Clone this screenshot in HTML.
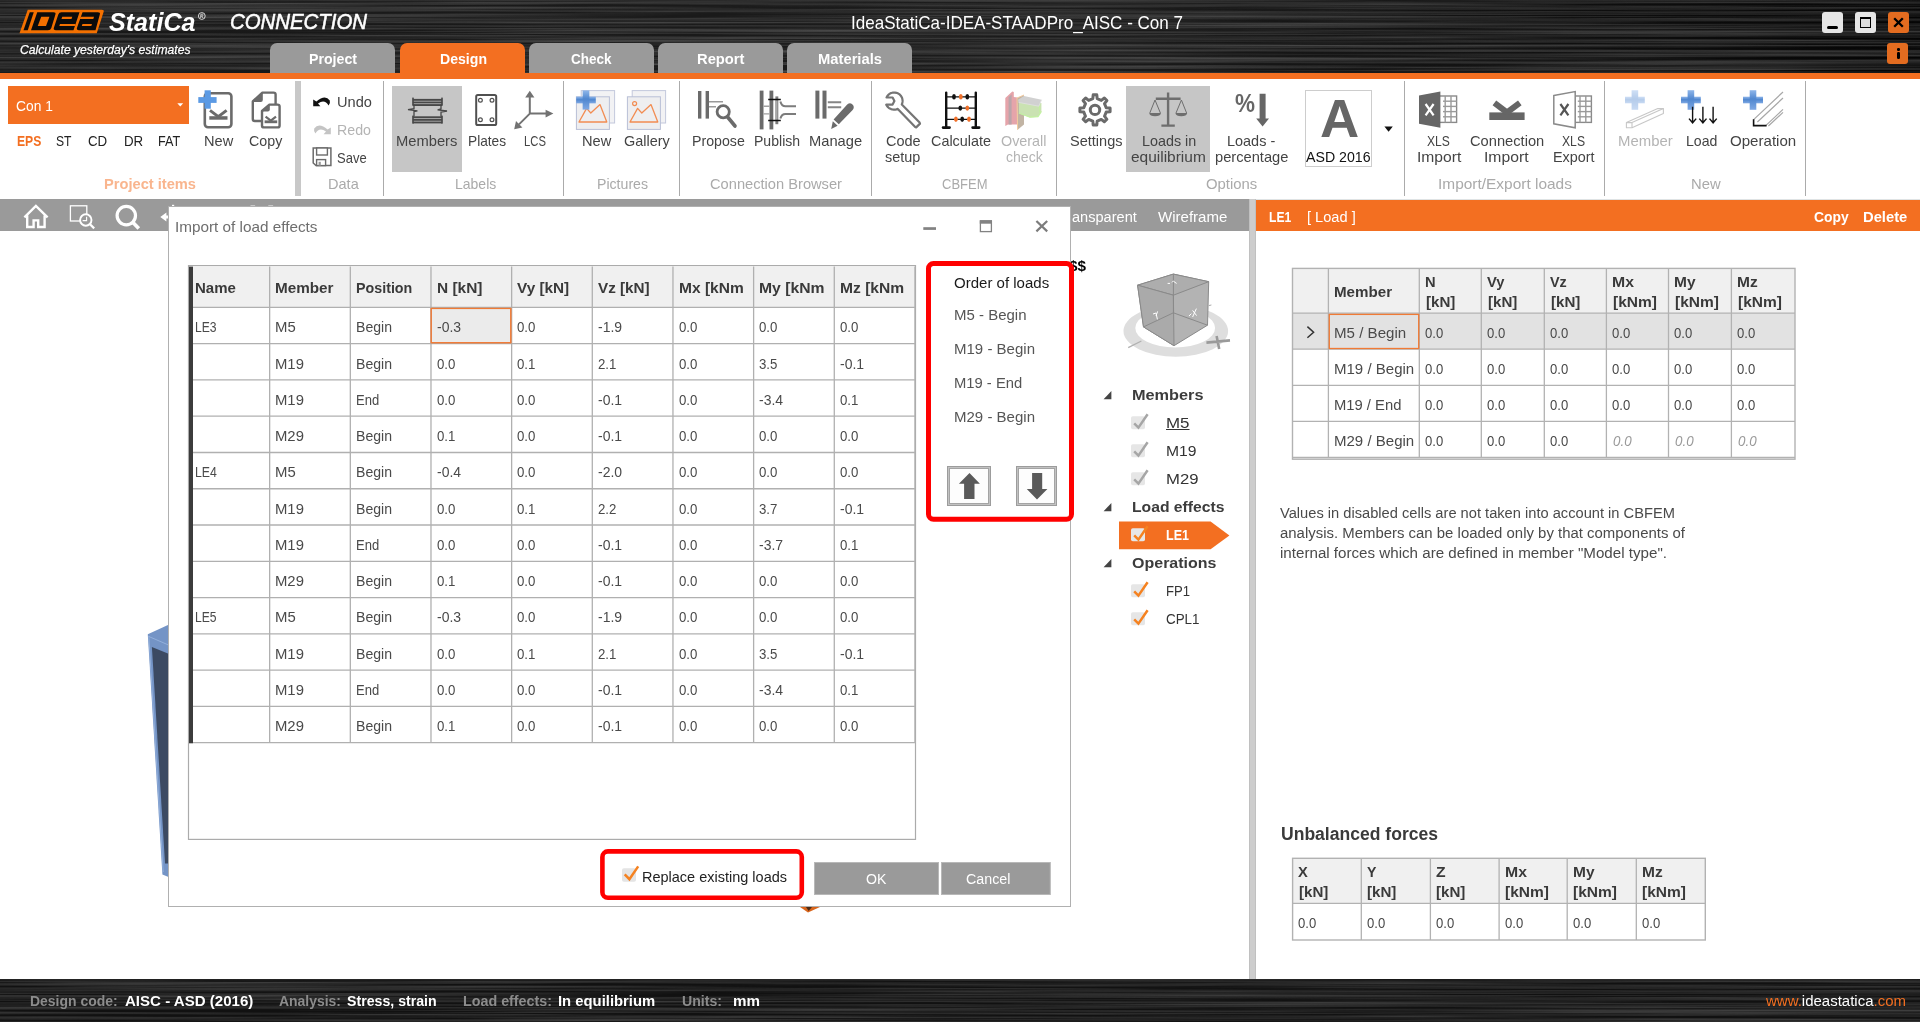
<!DOCTYPE html>
<html>
<head>
<meta charset="utf-8">
<title>IdeaStatiCa Connection</title>
<style>
*{box-sizing:border-box;margin:0;padding:0}
html,body{width:1920px;height:1022px;overflow:hidden;background:#fff}
body{font-family:"Liberation Sans",sans-serif;color:#444;position:relative;font-size:15px}
.abs{position:absolute}
.t{position:absolute;white-space:nowrap;line-height:1;display:block}
#hdr{left:0;top:0;width:1920px;height:74px;background:#1b1b1b;overflow:hidden}
#hdrline{left:0;top:73px;width:1920px;height:6px;background:#f36f21}
.tab{position:absolute;top:43px;height:30px;width:125px;border-radius:7px 7px 0 0;background:#9a9a9a}
.tab.on{background:#f36f21}
#ribbon{left:0;top:79px;width:1920px;height:120px;background:#fff}
.sep{position:absolute;top:81px;width:1px;height:115px;background:#ababab}
.hl{position:absolute;top:86px;height:86px;background:#c6c6c6}
#tbar{left:0;top:199px;width:1249px;height:32px;background:#9a9a9a}
#split{left:1249px;top:199px;width:7px;height:779.5px;background:#cdcdcd;border-left:1px solid #c0c0c0;border-right:1px solid #c0c0c0}
#ohdr{left:1256px;top:199px;width:664px;height:32px;background:#f36f21;border-top:1px solid #dfe3e4}
#status{left:0;top:978.5px;width:1920px;height:44px;background:#161616;overflow:hidden}
#dlg{left:168px;top:206px;width:903px;height:701px;background:#fff;border:1px solid #b0b0b0}
.vl{position:absolute;width:1px;background:#b4b4b4}
.hl1{position:absolute;height:1px;background:#b4b4b4}
.cb{position:absolute;width:15px;height:15px;background:#e4e4e4;border-radius:2px}
svg{position:absolute;overflow:visible}
</style>
</head>
<body>

<div id="hdr" class="abs">
<svg style="left:0;top:0" width="1920" height="74"><defs><filter id="br" x="0" y="0" width="100%" height="100%"><feTurbulence type="fractalNoise" baseFrequency="0.002 0.42" numOctaves="4" seed="7"/><feColorMatrix type="matrix" values="0 0 0 0 1  0 0 0 0 1  0 0 0 0 1  2.0 0 0 0 -0.62"/></filter><linearGradient id="hg" x1="0" x2="1" y1="0" y2="0"><stop offset="0" stop-color="#181818"/><stop offset="0.55" stop-color="#1b1b1b"/><stop offset="0.8" stop-color="#101010"/><stop offset="1" stop-color="#050505"/></linearGradient></defs><rect width="1920" height="74" fill="url(#hg)"/><rect width="1920" height="74" filter="url(#br)" opacity="0.2"/></svg>
</div>
<div id="hdrline" class="abs"></div>
<div class="tab" style="left:270px"></div>
<div class="tab on" style="left:400px"></div>
<div class="tab" style="left:529px"></div>
<div class="tab" style="left:658px"></div>
<div class="tab" style="left:787px"></div>
<div id="ribbon" class="abs"></div>
<div id="tbar" class="abs"></div>
<div id="split" class="abs"></div>
<div id="ohdr" class="abs"></div>
<div id="status" class="abs">
<svg style="left:0;top:0" width="1920" height="44"><rect width="1920" height="44" fill="#111111"/><rect width="1920" height="44" filter="url(#br)" opacity="0.19"/></svg>
</div>
<span class="t" style="top:51.48px;font-size:15.5px;color:#fff;font-weight:bold;left:308.50px;transform:scaleX(0.9132);transform-origin:0 50%;">Project</span><span class="t" style="top:51.48px;font-size:15.5px;color:#fff;font-weight:bold;left:439.50px;transform:scaleX(0.9093);transform-origin:0 50%;">Design</span><span class="t" style="top:51.48px;font-size:15.5px;color:#fff;font-weight:bold;left:571.45px;transform:scaleX(0.8704);transform-origin:0 50%;">Check</span><span class="t" style="top:51.48px;font-size:15.5px;color:#fff;font-weight:bold;left:697.45px;transform:scaleX(0.9509);transform-origin:0 50%;">Report</span><span class="t" style="top:51.48px;font-size:15.5px;color:#fff;font-weight:bold;left:817.50px;transform:scaleX(0.9523);transform-origin:0 50%;">Materials</span><span class="t" style="top:14.01px;font-size:18.5px;color:#fff;left:851.00px;transform:scaleX(0.9208);transform-origin:0 50%;">IdeaStatiCa-IDEA-STAADPro_AISC - Con 7</span><span class="t" style="top:993.48px;font-size:15.5px;color:#8c8c8c;font-weight:bold;left:30.40px;transform:scaleX(0.9000);transform-origin:0 50%;">Design code:</span><span class="t" style="top:993.48px;font-size:15.5px;color:#fff;font-weight:bold;left:125.00px;transform:scaleX(0.9714);transform-origin:0 50%;">AISC - ASD (2016)</span><span class="t" style="top:993.48px;font-size:15.5px;color:#8c8c8c;font-weight:bold;left:279.00px;transform:scaleX(0.8996);transform-origin:0 50%;">Analysis:</span><span class="t" style="top:993.48px;font-size:15.5px;color:#fff;font-weight:bold;left:347.00px;transform:scaleX(0.9133);transform-origin:0 50%;">Stress, strain</span><span class="t" style="top:993.48px;font-size:15.5px;color:#8c8c8c;font-weight:bold;left:462.50px;transform:scaleX(0.9226);transform-origin:0 50%;">Load effects:</span><span class="t" style="top:993.48px;font-size:15.5px;color:#fff;font-weight:bold;left:558.30px;transform:scaleX(0.9565);transform-origin:0 50%;">In equilibrium</span><span class="t" style="top:993.48px;font-size:15.5px;color:#8c8c8c;font-weight:bold;left:681.70px;transform:scaleX(0.9107);transform-origin:0 50%;">Units:</span><span class="t" style="top:993.48px;font-size:15.5px;color:#fff;font-weight:bold;left:732.50px;transform:scaleX(0.9790);transform-origin:0 50%;">mm</span><span class="t" style="top:993.18px;font-size:15.5px;color:#fff;left:1766.00px;transform:scaleX(0.9672);transform-origin:0 50%;"><span style="color:#f36f21">www.</span>ideastatica<span style="color:#f36f21">.com</span></span>
<svg style="left:0;top:0" width="220" height="40" viewBox="0 0 220 40">
<path d="M27.75,9.75 L101.8,9.75 Q104.4,9.75 103.6,12 L96.75,33.25 L19.5,33.25 Z" fill="#f37000"/>
<g fill="#0b0b0b">
<path d="M29.75,12.25 L33.75,12.25 L27.75,30.25 L23.5,30.25 Z"/>
<path d="M37.25,12.25 L53.3,12.25 Q56.2,12.25 55.4,14.6 L51.3,28 Q50.6,30.25 48,30.25 L31,30.25 Z"/>
<path d="M61.5,12.25 L79.5,12.25 L73.5,30.25 L56,30.25 Q53,30.25 53.9,27.8 L58.3,14.5 Q59,12.25 61.5,12.25 Z"/>
<path d="M82.5,12.25 L97.8,12.25 Q100.6,12.25 99.8,14.6 L95.5,30.25 L79,30.25 Q76.2,30.25 77,27.8 Z"/>
</g>
<g fill="#f37000">
<path d="M41.25,16.75 L49.5,16.75 L46,26 L37.75,26 Z"/>
<path d="M62.25,16.75 L72.25,16.75 L71.5,19 L61.5,19 Z"/>
<path d="M60,24 L75.6,24 L74.9,26 L59.3,26 Z"/>
<path d="M80.6,16.75 L94,16.75 L93.3,19 L79.9,19 Z"/>
<path d="M82.5,24 L92,24 L91.3,26 L81.8,26 Z"/>
</g>
<circle cx="201.8" cy="16" r="3.4" fill="none" stroke="#e8e8e8" stroke-width="0.9"/>
<path d="M200.6,17.9 L200.9,14.2 L202.4,14.2 Q203.3,14.3 203.1,15.2 Q202.9,16 201.9,16 L200.8,16 M201.9,16 L202.8,17.9" fill="none" stroke="#e8e8e8" stroke-width="0.8"/>
</svg>
<span class="t" style="top:9.69px;font-size:25.5px;color:#fff;font-weight:bold;font-style:italic;left:108.50px;transform:scaleX(0.9845);transform-origin:0 50%;">StatiCa</span><span class="t" style="top:11.40px;font-size:21.8px;color:#fff;font-style:italic;left:229.50px;transform:scaleX(0.9350);transform-origin:0 50%;-webkit-text-stroke:0.55px #fff;">CONNECTION</span><span class="t" style="top:44.09px;font-size:12.6px;color:#fff;font-style:italic;left:19.80px;transform:scaleX(0.9649);transform-origin:0 50%;-webkit-text-stroke:0.25px #fff;">Calculate yesterday's estimates</span>
<div class="abs" style="left:1822px;top:12px;width:21px;height:21px;background:#e6e6e6;border-radius:3px"></div>
<div class="abs" style="left:1827px;top:26px;width:11px;height:3px;background:#000;border-radius:1.5px"></div>
<div class="abs" style="left:1855px;top:12px;width:21px;height:21px;background:#e6e6e6;border-radius:3px"></div>
<div class="abs" style="left:1860px;top:17px;width:11px;height:11px;border:1.6px solid #000;border-top-width:2.2px;background:#dcdcdc"></div>
<div class="abs" style="left:1888px;top:12px;width:21px;height:21px;background:#e36c20;border-radius:3px"></div>
<svg style="left:1888px;top:12px" width="21" height="21"><path d="M6.2,6.2 L14.8,14.8 M14.8,6.2 L6.2,14.8" stroke="#000" stroke-width="2.3"/></svg>
<div class="abs" style="left:1887px;top:43px;width:21px;height:21px;background:#e36c20;border-radius:3px"></div>
<div class="abs" style="left:1897.2px;top:48px;width:2.6px;height:2.6px;background:#000;border-radius:50%"></div>
<div class="abs" style="left:1897.2px;top:52.4px;width:2.6px;height:6.6px;background:#000;border-radius:1.2px"></div>

<div class="abs" style="left:8px;top:86px;width:181px;height:38px;background:#f36f21"></div>
<svg style="left:177px;top:103px" width="7" height="4"><path d="M0.3,0.3 L6.2,0.3 L3.25,3.6 Z" fill="#fff"/></svg>
<div class="abs" style="left:295px;top:81px;width:6px;height:115px;background:#c8c8c8"></div>
<div class="hl" style="left:392px;width:70px"></div>
<div class="hl" style="left:1126px;width:84px"></div>
<div class="abs" style="left:1305px;top:90px;width:67px;height:77px;border:1px solid #cdcdcd;background:#fff"></div>
<div class="sep" style="left:383px"></div><div class="sep" style="left:563px"></div><div class="sep" style="left:679px"></div><div class="sep" style="left:871px"></div><div class="sep" style="left:1056px"></div><div class="sep" style="left:1404px"></div><div class="sep" style="left:1604px"></div><div class="sep" style="left:1805px"></div><span class="t" style="top:98.32px;font-size:15.2px;color:#fff;left:16.20px;transform:scaleX(0.9079);transform-origin:0 50%;">Con 1</span><span class="t" style="top:133.92px;font-size:14.6px;color:#222;left:56.25px;transform:scaleX(0.8308);transform-origin:0 50%;">ST</span><span class="t" style="top:133.92px;font-size:14.6px;color:#222;left:88.25px;transform:scaleX(0.9126);transform-origin:0 50%;">CD</span><span class="t" style="top:133.92px;font-size:14.6px;color:#222;left:123.75px;transform:scaleX(0.9126);transform-origin:0 50%;">DR</span><span class="t" style="top:133.92px;font-size:14.6px;color:#222;left:158.25px;transform:scaleX(0.8662);transform-origin:0 50%;">FAT</span><span class="t" style="top:133.92px;font-size:14.6px;color:#f36f21;font-weight:bold;left:16.50px;transform:scaleX(0.8321);transform-origin:0 50%;">EPS</span><span class="t" style="top:177.22px;font-size:14.6px;color:#f9b58e;font-weight:bold;left:103.50px;transform:scaleX(1.0038);transform-origin:0 50%;">Project items</span><span class="t" style="top:177.22px;font-size:14.6px;color:#aaa;left:328.00px;transform:scaleX(0.9975);transform-origin:0 50%;">Data</span><span class="t" style="top:177.22px;font-size:14.6px;color:#aaa;left:454.50px;transform:scaleX(0.9590);transform-origin:0 50%;">Labels</span><span class="t" style="top:177.22px;font-size:14.6px;color:#aaa;left:597.00px;transform:scaleX(0.9674);transform-origin:0 50%;">Pictures</span><span class="t" style="top:177.22px;font-size:14.6px;color:#aaa;left:710.00px;transform:scaleX(1.0044);transform-origin:0 50%;">Connection Browser</span><span class="t" style="top:177.22px;font-size:14.6px;color:#aaa;left:942.00px;transform:scaleX(0.8908);transform-origin:0 50%;">CBFEM</span><span class="t" style="top:177.22px;font-size:14.6px;color:#aaa;left:1206.25px;transform:scaleX(1.0189);transform-origin:0 50%;">Options</span><span class="t" style="top:177.22px;font-size:14.6px;color:#aaa;left:1438.30px;transform:scaleX(1.0581);transform-origin:0 50%;">Import/Export loads</span><span class="t" style="top:177.22px;font-size:14.6px;color:#aaa;left:1691.20px;transform:scaleX(1.0136);transform-origin:0 50%;">New</span><span class="t" style="top:134.02px;font-size:14.6px;color:#444;left:203.50px;transform:scaleX(0.9999);transform-origin:0 50%;">New</span><span class="t" style="top:134.02px;font-size:14.6px;color:#444;left:249.40px;transform:scaleX(0.9772);transform-origin:0 50%;">Copy</span><span class="t" style="top:134.02px;font-size:14.6px;color:#444;left:396.30px;transform:scaleX(1.0094);transform-origin:0 50%;">Members</span><span class="t" style="top:134.02px;font-size:14.6px;color:#444;left:467.50px;transform:scaleX(0.9393);transform-origin:0 50%;">Plates</span><span class="t" style="top:134.02px;font-size:14.6px;color:#444;left:523.70px;transform:scaleX(0.7714);transform-origin:0 50%;">LCS</span><span class="t" style="top:134.02px;font-size:14.6px;color:#444;left:581.50px;transform:scaleX(1.0033);transform-origin:0 50%;">New</span><span class="t" style="top:134.02px;font-size:14.6px;color:#444;left:624.10px;transform:scaleX(0.9906);transform-origin:0 50%;">Gallery</span><span class="t" style="top:134.02px;font-size:14.6px;color:#444;left:691.50px;transform:scaleX(0.9713);transform-origin:0 50%;">Propose</span><span class="t" style="top:134.02px;font-size:14.6px;color:#444;left:753.60px;transform:scaleX(0.9629);transform-origin:0 50%;">Publish</span><span class="t" style="top:134.02px;font-size:14.6px;color:#444;left:808.60px;transform:scaleX(1.0066);transform-origin:0 50%;">Manage</span><span class="t" style="top:134.02px;font-size:14.6px;color:#444;left:885.80px;transform:scaleX(0.9945);transform-origin:0 50%;">Code</span><span class="t" style="top:134.02px;font-size:14.6px;color:#444;left:931.40px;transform:scaleX(0.9861);transform-origin:0 50%;">Calculate</span><span class="t" style="top:134.02px;font-size:14.6px;color:#b4b4b4;left:1000.70px;transform:scaleX(0.9841);transform-origin:0 50%;">Overall</span><span class="t" style="top:134.02px;font-size:14.6px;color:#444;left:1069.50px;transform:scaleX(0.9956);transform-origin:0 50%;">Settings</span><span class="t" style="top:134.02px;font-size:14.6px;color:#444;left:1141.50px;transform:scaleX(0.9839);transform-origin:0 50%;">Loads in</span><span class="t" style="top:134.02px;font-size:14.6px;color:#444;left:1227.30px;transform:scaleX(0.9900);transform-origin:0 50%;">Loads -</span><span class="t" style="top:134.02px;font-size:14.6px;color:#444;left:1427.40px;transform:scaleX(0.8299);transform-origin:0 50%;">XLS</span><span class="t" style="top:134.02px;font-size:14.6px;color:#444;left:1469.50px;transform:scaleX(1.0062);transform-origin:0 50%;">Connection</span><span class="t" style="top:134.02px;font-size:14.6px;color:#444;left:1562.40px;transform:scaleX(0.8335);transform-origin:0 50%;">XLS</span><span class="t" style="top:134.02px;font-size:14.6px;color:#b4b4b4;left:1617.90px;transform:scaleX(1.0218);transform-origin:0 50%;">Member</span><span class="t" style="top:134.02px;font-size:14.6px;color:#444;left:1685.80px;transform:scaleX(0.9671);transform-origin:0 50%;">Load</span><span class="t" style="top:134.02px;font-size:14.6px;color:#444;left:1729.60px;transform:scaleX(1.0329);transform-origin:0 50%;">Operation</span><span class="t" style="top:150.02px;font-size:14.6px;color:#444;left:885.20px;transform:scaleX(0.9887);transform-origin:0 50%;">setup</span><span class="t" style="top:150.02px;font-size:14.6px;color:#b4b4b4;left:1005.60px;transform:scaleX(0.9626);transform-origin:0 50%;">check</span><span class="t" style="top:150.02px;font-size:14.6px;color:#444;left:1130.50px;transform:scaleX(1.0598);transform-origin:0 50%;">equilibrium</span><span class="t" style="top:150.02px;font-size:14.6px;color:#444;left:1215.00px;transform:scaleX(1.0050);transform-origin:0 50%;">percentage</span><span class="t" style="top:150.02px;font-size:14.6px;color:#444;left:1416.70px;transform:scaleX(1.0711);transform-origin:0 50%;">Import</span><span class="t" style="top:150.02px;font-size:14.6px;color:#444;left:1484.40px;transform:scaleX(1.0759);transform-origin:0 50%;">Import</span><span class="t" style="top:150.02px;font-size:14.6px;color:#444;left:1553.00px;transform:scaleX(0.9861);transform-origin:0 50%;">Export</span><span class="t" style="top:149.92px;font-size:14.6px;color:#111;left:1306.20px;transform:scaleX(0.9710);transform-origin:0 50%;">ASD 2016</span><span class="t" style="top:95.02px;font-size:14.6px;color:#444;left:337.40px;transform:scaleX(1.0003);transform-origin:0 50%;">Undo</span><span class="t" style="top:123.02px;font-size:14.6px;color:#b4b4b4;left:337.40px;transform:scaleX(0.9716);transform-origin:0 50%;">Redo</span><span class="t" style="top:150.92px;font-size:14.6px;color:#444;left:337.40px;transform:scaleX(0.8928);transform-origin:0 50%;">Save</span><span class="t" style="top:92.46px;font-size:53px;color:#666;font-weight:bold;left:1319.50px;transform:scaleX(1.0240);transform-origin:0 50%;">A</span><span class="t" style="top:91.49px;font-size:25.5px;color:#666;font-weight:bold;left:1235.00px;transform:scaleX(0.8815);transform-origin:0 50%;">%</span><svg style="left:0;top:0" width="1920" height="200" viewBox="0 0 1920 200"><defs><linearGradient id="bp" x1="0" x2="0" y1="0" y2="1"><stop offset="0" stop-color="#8fb6ea"/><stop offset="0.45" stop-color="#4f86cf"/><stop offset="1" stop-color="#7fa9e4"/></linearGradient></defs><rect x="204.8" y="93.2" width="26.6" height="34" rx="3.2" fill="#fff" stroke="#6b6b6b" stroke-width="2.6"/><path d="M210,110.4 L218.3,116.6 L226.6,110.4" fill="none" stroke="#6b6b6b" stroke-width="3"/><rect x="209.3" y="116.2" width="18.2" height="3.5" fill="#6b6b6b"/><rect x="198.3" y="97.1" width="18.3" height="5.8" fill="#5b9ae4"/><rect x="204.6" y="90.3" width="6.2" height="18.4" fill="#5b9ae4"/><path d="M262.4,92.6 L273.6,92.6 Q275.6,92.6 275.6,94.6 L275.6,119 Q275.6,121 273.6,121 L254.8,121 Q252.8,121 252.8,119 L252.8,101.4 Z" fill="#fff" stroke="#6b6b6b" stroke-width="2.4" stroke-linejoin="round"/><path d="M252.4,102 L260.8,102 Q262.8,102 262.8,100 L262.8,92 Z" fill="#6b6b6b"/><path d="M269.4,104.6 L277.6,104.6 Q279.6,104.6 279.6,106.6 L279.6,125.4 Q279.6,127.4 277.6,127.4 L264,127.4 Q262,127.4 262,125.4 L262,111 Z" fill="#fff" stroke="#6b6b6b" stroke-width="2.4" stroke-linejoin="round"/><path d="M261.6,111.6 L267.8,111.6 Q269.8,111.6 269.8,109.6 L269.8,104 Z" fill="#6b6b6b"/><path d="M265.6,116.6 L270.8,120.6 L276,116.6" fill="none" stroke="#6b6b6b" stroke-width="2.2"/><rect x="264.6" y="120.4" width="12.6" height="2.8" fill="#6b6b6b"/><path d="M313.2,99.4 L313.2,106.2 L320.4,106.2 L318,103.6 Q324.6,98.6 328.6,105.6 Q330.6,103 329.8,100.4 Q325,94 316.4,101.6 Z" fill="#111"/><path d="M330.8,127.4 L330.8,134.2 L323.6,134.2 L326,131.6 Q319.4,126.6 315.4,133.6 Q313.4,131 314.2,128.4 Q319,122 327.6,129.6 Z" fill="#c4c4c4"/><path d="M313.2,148 L330.9,148 L330.9,165.6 L316,165.6 L313.2,163 Z" fill="#fff" stroke="#6b6b6b" stroke-width="1.5"/><rect x="316.6" y="148" width="10.8" height="7" fill="#fff" stroke="#6b6b6b" stroke-width="1.4"/><rect x="316.6" y="159.6" width="9" height="6" fill="#fff" stroke="#6b6b6b" stroke-width="1.4"/><rect x="318.6" y="161.8" width="2.2" height="3.8" fill="#999"/><rect x="412.8" y="98.9" width="29.4" height="1.9" fill="#484848"/><rect x="412.8" y="101.5" width="29.4" height="1.9" fill="#484848"/><rect x="412.8" y="104.1" width="29.4" height="1.9" fill="#484848"/><rect x="412.8" y="116.3" width="29.4" height="1.9" fill="#484848"/><rect x="412.8" y="118.9" width="29.4" height="1.9" fill="#484848"/><rect x="412.8" y="121.5" width="29.4" height="1.9" fill="#484848"/><path d="M414,104.5 L414,108.6 L408,109.6 L417.4,110.8 L414,111.6 L414,116.6 M441,104.5 L441,109 L437.6,109.8 L447,111 L441,112 L441,116.6" fill="none" stroke="#484848" stroke-width="1.3"/><rect x="412.2" y="97.6" width="1.6" height="8" fill="#484848"/><rect x="441.2" y="97.6" width="1.6" height="8" fill="#484848"/><rect x="412.2" y="115.6" width="1.6" height="8" fill="#484848"/><rect x="441.2" y="115.6" width="1.6" height="8" fill="#484848"/><rect x="476.2" y="95" width="20" height="30" rx="1.6" fill="#fff" stroke="#505050" stroke-width="2"/><circle cx="480.4" cy="100.2" r="1.9" fill="none" stroke="#505050" stroke-width="1.2"/><circle cx="480.4" cy="119.8" r="1.9" fill="none" stroke="#505050" stroke-width="1.2"/><circle cx="492" cy="100.2" r="1.9" fill="none" stroke="#505050" stroke-width="1.2"/><circle cx="492" cy="119.8" r="1.9" fill="none" stroke="#505050" stroke-width="1.2"/><path d="M529.8,113.6 L529.8,97 M529.8,113.6 L546,113.6 M529.8,113.6 L519,124.4" fill="none" stroke="#727272" stroke-width="2"/><path d="M525.2,97.6 L529.8,90.8 L534.4,97.6 Z M545.6,109.8 L553.4,113.6 L545.6,117.4 Z M514.2,129.2 L516,121 L522.4,127.4 Z" fill="#727272"/><rect x="581.2" y="90.6" width="33.4" height="32.4" fill="#f2f2f4" stroke="#c3c8dc" stroke-width="1"/><rect x="576.4" y="96.8" width="33" height="32.6" fill="#eeeef0" stroke="#b9bfd6" stroke-width="1"/><path d="M579,122 L586.6,108.4 L590.8,113 L600,104.6 L606.8,122 Z" fill="none" stroke="#f28c52" stroke-width="1.3" stroke-linejoin="round"/><g opacity="1.0"><rect x="576.2" y="96.65" width="19.59999999999991" height="6.7" fill="url(#bp)"/><rect x="582.65" y="90.4" width="6.7" height="19.19999999999999" fill="url(#bp)"/></g><rect x="632.2" y="90.6" width="33.4" height="32.4" fill="#f2f2f4" stroke="#c3c8dc" stroke-width="1"/><rect x="627.4" y="96.8" width="33" height="32.6" fill="#eeeef0" stroke="#b9bfd6" stroke-width="1"/><path d="M630,122 L637.6,108.4 L641.8,113 L651,104.6 L657.8,122 Z" fill="none" stroke="#f28c52" stroke-width="1.3" stroke-linejoin="round"/><circle cx="634.6" cy="103.6" r="2" fill="none" stroke="#f28c52" stroke-width="1.2"/><rect x="698" y="91" width="3.4" height="27.6" fill="#6b6b6b"/><rect x="705.6" y="91" width="3.4" height="27.6" fill="#6b6b6b"/><path d="M709,101.8 L723,101.8 M709,106.8 L716,106.8" stroke="#999" stroke-width="1.4"/><circle cx="723.2" cy="111.8" r="6.1" fill="#fff" stroke="#6b6b6b" stroke-width="2.8"/><path d="M727.6,117 L735,126" stroke="#6b6b6b" stroke-width="3.6" stroke-linecap="round"/><rect x="759.7" y="90.6" width="3.8" height="38.8" fill="#6b6b6b"/><rect x="769.5" y="90.6" width="3.8" height="38.8" fill="#6b6b6b"/><rect x="775.4" y="96.4" width="2.9" height="27.8" fill="#7a7a7a"/><rect x="776.4" y="100.4" width="0.9" height="19.4" fill="#c8c8c8"/><path d="M763.5,106.2 L769.5,106.2 M763.5,113.9 L769.5,113.9" stroke="#a0a0a0" stroke-width="1.4"/><path d="M780.4,101.4 Q781.6,106.2 785.4,106.2 L796,106.2 M780.4,118.6 Q781.6,113.9 785.4,113.9 L796,113.9" fill="none" stroke="#7c7c7c" stroke-width="2"/><path d="M768.2,99.5 L780.8,99.5 M768.2,120.5 L780.8,120.5" stroke="#111" stroke-width="1.6"/><rect x="815.4" y="90.6" width="4" height="28" fill="#6b6b6b"/><rect x="822.5" y="90.6" width="4" height="28" fill="#6b6b6b"/><path d="M827.8,102.3 L841.2,102.3 M827.8,107.2 L841.2,107.2" stroke="#858585" stroke-width="1.9"/><path d="M847.2,104.6 Q850.4,101.8 853,105 Q854.8,107.8 852.4,110.2 L838.8,124.2 L833.6,119.4 Z" fill="#6b6b6b"/><path d="M832.8,121.2 L837.6,125.8 L831.2,129 Z" fill="#6b6b6b"/><path d="M886.5,97.5 L887.2,96.3 L888.0,95.3 L888.9,94.4 L890.0,93.6 L891.2,93.0 L892.5,92.7 L893.8,92.5 L895.1,92.6 L896.4,92.8 L897.7,93.3 L898.8,93.9 L899.9,94.7 L900.8,95.7 L901.5,96.8 L902.1,98.0 L902.4,99.3 L902.6,100.6 L902.5,101.9 L902.3,103.2 L901.8,104.4 L919.6,122.6 L920.0,123.6 L916.2,127.4 L915.2,127.0 L897.8,108.9 L896.5,109.4 L895.2,109.6 L893.8,109.7 L892.4,109.5 L891.1,109.1 L889.9,108.6 L888.7,107.8 L887.7,106.9 L886.9,105.8 L886.2,104.6 L892.6,104.6 L894.4,101.0 L892.6,97.5 Z" fill="#fff" stroke="#757575" stroke-width="2.2" stroke-linejoin="round"/><path d="M946.2,92.6 L946.2,127.4 M975.8,92.6 L975.8,127.4" stroke="#111" stroke-width="2.4" stroke-linecap="round"/><path d="M943,127.6 L949.6,127.6 M972.6,127.6 L979.2,127.6" stroke="#111" stroke-width="2.6" stroke-linecap="round"/><path d="M946.2,96.8 L975.8,96.8 M946.2,108.1 L975.8,108.1 M946.2,119.3 L975.8,119.3" stroke="#111" stroke-width="1.3"/><ellipse cx="954" cy="96.8" rx="1.9" ry="2.7" fill="#111"/><ellipse cx="960.8" cy="96.8" rx="1.9" ry="2.7" fill="#f0702a"/><ellipse cx="967.3" cy="96.8" rx="1.9" ry="2.7" fill="#111"/><ellipse cx="960.3" cy="108.1" rx="1.9" ry="2.7" fill="#111"/><ellipse cx="967.3" cy="108.1" rx="1.9" ry="2.7" fill="#f0702a"/><ellipse cx="955.9" cy="119.3" rx="1.9" ry="2.7" fill="#f0702a"/><ellipse cx="962.2" cy="119.3" rx="1.9" ry="2.7" fill="#111"/><ellipse cx="969" cy="119.3" rx="1.9" ry="2.7" fill="#f0702a"/><g opacity="0.8"><path d="M1005.3,97.9 L1012.3,91.4 L1013.8,92 L1013.8,97 L1017.4,97.6 L1017.4,124.4 L1008,124.4 L1005.3,126 Z" fill="#df8e95"/><path d="M1008.6,97 L1011.6,94.4 L1011.6,124.4 L1008.6,124.4 Z" fill="#a98f96"/><path d="M1017,98 L1024,95 L1024,124.6 L1017.6,129.8 Z" fill="#b3a28e"/><path d="M1017,98 L1017.6,129.8" stroke="#f2bd85" stroke-width="1"/><path d="M1017,98 L1024,95" stroke="#f2bd85" stroke-width="0.9"/><path d="M1018.9,103 L1041.4,103 L1041.4,111.6 L1038,116.8 L1030,117.4 L1018.9,113.4 Z" fill="#bddc9f"/><path d="M1018.9,113 L1030,117.2 L1038,116.6 L1041.4,111.4" fill="none" stroke="#b4ee8a" stroke-width="1.2"/><path d="M1039.6,103 L1039.6,112" stroke="#b4ee8a" stroke-width="1"/><path d="M1018,99.8 L1024,96 L1041.6,99.8 L1038.8,106.2 L1018.6,102.4 Z" fill="#c6c6c6"/><path d="M1018.6,102.4 L1038.8,106.2 L1041.6,99.8" fill="none" stroke="#dadada" stroke-width="0.8"/></g><path d="M1092.8,98.7 L1093.2,94.8 L1096.8,94.8 L1097.2,98.7 L1101.3,100.4 L1104.4,98.0 L1106.9,100.5 L1104.5,103.6 L1106.2,107.7 L1110.1,108.1 L1110.1,111.7 L1106.2,112.1 L1104.5,116.2 L1106.9,119.3 L1104.4,121.8 L1101.3,119.4 L1097.2,121.1 L1096.8,125.0 L1093.2,125.0 L1092.8,121.1 L1088.7,119.4 L1085.6,121.8 L1083.1,119.3 L1085.5,116.2 L1083.8,112.1 L1079.9,111.7 L1079.9,108.1 L1083.8,107.7 L1085.5,103.6 L1083.1,100.5 L1085.6,98.0 L1088.7,100.4 Z" fill="#fff" stroke="#6a6a6a" stroke-width="3" stroke-linejoin="round"/><circle cx="1095.0" cy="109.9" r="4.7" fill="#fff" stroke="#6a6a6a" stroke-width="3"/><path d="M1168.1,92.6 L1168.1,125.6 M1161.4,125.6 L1174.8,125.6 M1155.8,98.8 L1180.6,98.8" stroke="#6e6e6e" stroke-width="2.4"/><path d="M1155,100 L1149.8,113 M1155,100 L1160.4,113 M1181.4,100 L1176,113 M1181.4,100 L1186.6,113" stroke="#6e6e6e" stroke-width="1"/><path d="M1149.2,113 L1161,113 Q1160.4,116.2 1155.1,116.2 Q1149.8,116.2 1149.2,113 Z M1175.4,113 L1187.2,113 Q1186.6,116.2 1181.3,116.2 Q1176,116.2 1175.4,113 Z" fill="#6e6e6e"/><path d="M1259.6,93.8 L1265.6,93.8 L1265.6,118.6 L1269,118.6 L1262.6,126.4 L1256.2,118.6 L1259.6,118.6 Z" fill="#666"/><path d="M1384.4,126.4 L1392.8,126.4 L1388.6,131.8 Z" fill="#111"/><rect x="1439" y="96" width="17.6" height="26.4" fill="#fff" stroke="#8a8a8a" stroke-width="1.4"/><path d="M1443,101.2 L1456.6,101.2" stroke="#9a9a9a" stroke-width="1.4"/><path d="M1443,106.4 L1456.6,106.4" stroke="#9a9a9a" stroke-width="1.4"/><path d="M1443,111.6 L1456.6,111.6" stroke="#9a9a9a" stroke-width="1.4"/><path d="M1443,116.8 L1456.6,116.8" stroke="#9a9a9a" stroke-width="1.4"/><path d="M1445.2,96 L1445.2,122.4" stroke="#9a9a9a" stroke-width="1.4"/><path d="M1451,96 L1451,122.4" stroke="#9a9a9a" stroke-width="1.4"/><path d="M1419,95.6 L1440.4,91.6 L1440.4,127.8 L1419,123.8 Z" fill="#666"/><path d="M1425.6,104 L1433.6,115.4 M1433.6,104 L1425.6,115.4" stroke="#fff" stroke-width="2.2"/><rect x="1573.8" y="96" width="17.6" height="26.4" fill="#fff" stroke="#8a8a8a" stroke-width="1.4"/><path d="M1577.8,101.2 L1591.3999999999999,101.2" stroke="#9a9a9a" stroke-width="1.4"/><path d="M1577.8,106.4 L1591.3999999999999,106.4" stroke="#9a9a9a" stroke-width="1.4"/><path d="M1577.8,111.6 L1591.3999999999999,111.6" stroke="#9a9a9a" stroke-width="1.4"/><path d="M1577.8,116.8 L1591.3999999999999,116.8" stroke="#9a9a9a" stroke-width="1.4"/><path d="M1580.0,96 L1580.0,122.4" stroke="#9a9a9a" stroke-width="1.4"/><path d="M1585.8,96 L1585.8,122.4" stroke="#9a9a9a" stroke-width="1.4"/><path d="M1553.8,95.6 L1575.2,91.6 L1575.2,127.8 L1553.8,123.8 Z" fill="#fff" stroke="#8a8a8a" stroke-width="1.5"/><path d="M1560.3999999999999,104 L1568.3999999999999,115.4 M1568.3999999999999,104 L1560.3999999999999,115.4" stroke="#555" stroke-width="2.2"/><rect x="1489.3" y="112.4" width="35.3" height="7.6" fill="#666"/><path d="M1494.4,102.8 L1507,112.4 L1519.8,102.8" fill="none" stroke="#666" stroke-width="6"/><g opacity="0.42"><rect x="1625" y="96.7" width="19.799999999999955" height="6.6" fill="url(#bp)"/><rect x="1631.6000000000001" y="90.2" width="6.6" height="19.599999999999994" fill="url(#bp)"/></g><g opacity="0.55" fill="#fff" stroke="#9a9a9a" stroke-width="1.1" stroke-linejoin="round"><path d="M1626.4,122.6 L1657.8,108.6 L1663.4,108.6 L1663.4,113.6 L1632,127.8 L1626.4,127.8 Z"/><path d="M1626.4,122.6 L1632,122.6 L1632,127.8 M1632,122.6 L1663.4,108.6" fill="none"/></g><g opacity="1.0"><rect x="1681" y="96.7" width="19.799999999999955" height="6.6" fill="url(#bp)"/><rect x="1687.6000000000001" y="90.2" width="6.6" height="19.599999999999994" fill="url(#bp)"/></g><path d="M1692.6,106.8 L1692.6,122.4 M1689.0,118.6 L1692.6,122.8 L1696.1999999999998,118.6" fill="none" stroke="#111" stroke-width="1.4"/><path d="M1702.9,106.8 L1702.9,122.4 M1699.3000000000002,118.6 L1702.9,122.8 L1706.5,118.6" fill="none" stroke="#111" stroke-width="1.4"/><path d="M1713.1,106.8 L1713.1,122.4 M1709.5,118.6 L1713.1,122.8 L1716.6999999999998,118.6" fill="none" stroke="#111" stroke-width="1.4"/><g opacity="1.0"><rect x="1743" y="96.7" width="20" height="6.6" fill="url(#bp)"/><rect x="1749.7" y="90.2" width="6.6" height="19.599999999999994" fill="url(#bp)"/></g><path d="M1753.6,119.6 L1783,92 M1757.4,122 L1783,98 M1766,125.4 L1783,109.4 M1768.4,126 L1783,112.4" stroke="#a8a8a8" stroke-width="1.2"/><path d="M1753.6,119.2 L1753.6,125.6 L1766.6,125.6" fill="none" stroke="#111" stroke-width="1.6"/></svg><svg style="left:0;top:0" width="1260" height="980" viewBox="0 0 1260 980"><path d="M24.4,217.4 L35.9,206 L47.6,217.4 M27.2,215.6 L27.2,227 L33.6,227 L33.6,220.4 L38.2,220.4 L38.2,227 L44.6,227 L44.6,215.6" fill="none" stroke="#fff" stroke-width="2.4" stroke-linejoin="miter"/><rect x="70.4" y="205.8" width="16.4" height="15.2" fill="none" stroke="#fff" stroke-width="1.3"/><circle cx="85.8" cy="220" r="5.7" fill="#9a9a9a" stroke="#fff" stroke-width="1.9"/><path d="M82.6,220.6 L86.6,220.6 L86.6,216.8" fill="none" stroke="#fff" stroke-width="1.1"/><path d="M90,224.2 L94.2,228.4" stroke="#fff" stroke-width="2.2"/><circle cx="126.3" cy="215.6" r="9.2" fill="none" stroke="#fff" stroke-width="3.2"/><path d="M133,222.6 L138.8,228.6" stroke="#fff" stroke-width="3.6"/><path d="M160.3,216.9 L166.4,212.4 L166.4,215.4 L170,215.4 L170,218.4 L166.4,218.4 L166.4,221.6 Z" fill="#fff"/><rect x="172" y="204.8" width="2.2" height="1.4" fill="#fff"/><rect x="250.5" y="205" width="4.6" height="1.2" fill="#c8c8c8"/><rect x="268.3" y="205" width="4.8" height="1.2" fill="#c8c8c8"/><path d="M147.8,634.2 L168.5,624.8 L168.5,877 L162.4,874.6 Z" fill="#7494c6"/><path d="M151.9,647 L168.5,653.8 L168.5,863.4 L165,863.4 Z" fill="#3c4a62"/><path d="M148.6,636.4 L168.5,645 M148.8,636 L163.2,872" fill="none" stroke="#9bb6e0" stroke-width="0.8"/><path d="M800,907 L820,907 L808,912.4 Z" fill="#d8651c"/><path d="M806,907 L812,907 L808.6,911 Z" fill="#4a2a14"/><path fill-rule="evenodd" fill="#dedede" d="M1123.5,331 a52.3,25.8 0 1,0 104.6,0 a52.3,25.8 0 1,0 -104.6,0 Z M1135.3,328 a39.9,19.4 0 1,0 79.8,0 a39.9,19.4 0 1,0 -79.8,0 Z"/><path d="M1128.2,347.6 L1141.4,341" stroke="#b0b0b0" stroke-width="1.2"/><path d="M1173.4,274.1 L1208.7,281.7 L1207.5,325.2 L1174,345.7 L1143.5,326.9 L1137.6,285.2 Z" fill="#b3b3b3" stroke="#8a8a8a" stroke-width="1"/><path d="M1137.6,285.2 L1173.4,295.2 L1208.7,281.7 L1173.4,274.1 Z" fill="#adadad" stroke="#8a8a8a" stroke-width="1"/><path d="M1137.6,285.2 L1173.4,295.2 L1174,345.7 L1143.5,326.9 Z" fill="#aaaaaa" stroke="#8a8a8a" stroke-width="1"/><path d="M1173.4,274.1 L1173.4,312.8 L1143.5,326.9 M1173.4,312.8 L1207.5,325.2" fill="none" stroke="#8a8a8a" stroke-width="1"/><path d="M1153,314 L1156,313 L1157.4,319.4 M1157.6,311.4 L1156,316 M1189,316 L1191.4,313.6 M1192.6,310.4 L1196.6,315.6 M1196.4,308.6 L1192.6,317 M1167.6,283.4 L1170,283.4 M1172,282.4 L1173.4,281 L1175,282.4 L1176.6,283.4" fill="none" stroke="#fff" stroke-width="1"/><path d="M1206.4,342.6 L1230,340.4 M1216.6,336 L1219.2,349" stroke="#9a9a9a" stroke-width="2.6"/><path d="M1208.7,305.6 L1211.4,305" stroke="#aaa" stroke-width="1"/><path d="M1111.4,391.0 L1111.4,399.20000000000005 L1103.6,399.20000000000005 Z" fill="#444"/><path d="M1111.4,503.0 L1111.4,511.20000000000005 L1103.6,511.20000000000005 Z" fill="#444"/><path d="M1111.4,559.0 L1111.4,567.2 L1103.6,567.2 Z" fill="#444"/><path d="M1119,521.5 L1210.6,521.5 L1229.4,535.4 L1210.6,549.3 L1119,549.3 Z" fill="#f36f21"/><rect x="1131" y="416.2" width="14" height="13" rx="1.8" fill="#e6e6e6"/><path d="M1134.2,423.4 L1138.4,427.59999999999997 L1147.6,414.2" fill="none" stroke="#a6a6a6" stroke-width="2.5"/><rect x="1131" y="444.2" width="14" height="13" rx="1.8" fill="#e6e6e6"/><path d="M1134.2,451.4 L1138.4,455.59999999999997 L1147.6,442.2" fill="none" stroke="#a6a6a6" stroke-width="2.5"/><rect x="1131" y="472.2" width="14" height="13" rx="1.8" fill="#e6e6e6"/><path d="M1134.2,479.4 L1138.4,483.59999999999997 L1147.6,470.2" fill="none" stroke="#a6a6a6" stroke-width="2.5"/><rect x="1131" y="528.2" width="14" height="13" rx="1.8" fill="#e6e6e6"/><path d="M1134.2,535.4000000000001 L1138.4,539.6 L1147.6,526.2" fill="none" stroke="#f58220" stroke-width="2.5"/><rect x="1131" y="584.2" width="14" height="13" rx="1.8" fill="#e6e6e6"/><path d="M1134.2,591.4000000000001 L1138.4,595.6 L1147.6,582.2" fill="none" stroke="#f58220" stroke-width="2.5"/><rect x="1131" y="612.2" width="14" height="13" rx="1.8" fill="#e6e6e6"/><path d="M1134.2,619.4000000000001 L1138.4,623.6 L1147.6,610.2" fill="none" stroke="#f58220" stroke-width="2.5"/></svg><span class="t" style="top:208.86px;font-size:15.4px;color:#fff;left:1071.60px;transform:scaleX(0.9464);transform-origin:0 50%;">ansparent</span><span class="t" style="top:208.86px;font-size:15.4px;color:#fff;left:1158.20px;transform:scaleX(0.9777);transform-origin:0 50%;">Wireframe</span><span class="t" style="top:259.07px;font-size:14.5px;color:#000;font-weight:bold;left:1069.00px;transform:scaleX(1.0532);transform-origin:0 50%;">$$</span><span class="t" style="top:387.28px;font-size:15.5px;color:#3c3c3c;font-weight:bold;left:1131.50px;transform:scaleX(1.0505);transform-origin:0 50%;">Members</span><span class="t" style="top:499.28px;font-size:15.5px;color:#3c3c3c;font-weight:bold;left:1131.50px;transform:scaleX(1.0130);transform-origin:0 50%;">Load effects</span><span class="t" style="top:555.28px;font-size:15.5px;color:#3c3c3c;font-weight:bold;left:1131.50px;transform:scaleX(1.0327);transform-origin:0 50%;">Operations</span><span class="t" style="top:415.32px;font-size:15.2px;color:#333;left:1165.50px;transform:scaleX(1.1132);transform-origin:0 50%;text-decoration:underline;">M5</span><span class="t" style="top:443.32px;font-size:15.2px;color:#333;left:1165.50px;transform:scaleX(1.0323);transform-origin:0 50%;">M19</span><span class="t" style="top:471.32px;font-size:15.2px;color:#333;left:1165.50px;transform:scaleX(1.0999);transform-origin:0 50%;">M29</span><span class="t" style="top:527.32px;font-size:15.2px;color:#fff;font-weight:bold;left:1165.50px;transform:scaleX(0.8256);transform-origin:0 50%;">LE1</span><span class="t" style="top:583.32px;font-size:15.2px;color:#333;left:1165.50px;transform:scaleX(0.8615);transform-origin:0 50%;">FP1</span><span class="t" style="top:611.32px;font-size:15.2px;color:#333;left:1165.50px;transform:scaleX(0.8816);transform-origin:0 50%;">CPL1</span><span class="t" style="top:208.86px;font-size:15.4px;color:#fff;font-weight:bold;left:1268.80px;transform:scaleX(0.7863);transform-origin:0 50%;">LE1</span><span class="t" style="top:208.86px;font-size:15.4px;color:#fff;left:1307.30px;transform:scaleX(0.9485);transform-origin:0 50%;">[ Load ]</span><span class="t" style="top:208.86px;font-size:15.4px;color:#fff;font-weight:bold;left:1814.00px;transform:scaleX(0.9017);transform-origin:0 50%;">Copy</span><span class="t" style="top:208.86px;font-size:15.4px;color:#fff;font-weight:bold;left:1862.50px;transform:scaleX(0.9588);transform-origin:0 50%;">Delete</span><svg style="left:0;top:0" width="1920" height="980" viewBox="0 0 1920 980"><rect x="1292.5" y="268.4" width="502.5" height="44.80000000000001" fill="#f0f0f0"/><rect x="1292.5" y="313.2" width="502.5" height="36.0" fill="#e2e2e2"/><rect x="1292.5" y="268.4" width="502.5" height="190.8" fill="none" stroke="#b2b2b2" stroke-width="1.4"/><path d="M1328.4,268.4 L1328.4,457.5" stroke="#b2b2b2" stroke-width="1.3"/><path d="M1419.3,268.4 L1419.3,457.5" stroke="#b2b2b2" stroke-width="1.3"/><path d="M1481.3,268.4 L1481.3,457.5" stroke="#b2b2b2" stroke-width="1.3"/><path d="M1544.3,268.4 L1544.3,457.5" stroke="#b2b2b2" stroke-width="1.3"/><path d="M1606.4,268.4 L1606.4,457.5" stroke="#b2b2b2" stroke-width="1.3"/><path d="M1668.5,268.4 L1668.5,457.5" stroke="#b2b2b2" stroke-width="1.3"/><path d="M1731.4,268.4 L1731.4,457.5" stroke="#b2b2b2" stroke-width="1.3"/><path d="M1292.5,313.2 L1795,313.2" stroke="#b2b2b2" stroke-width="1.3"/><path d="M1292.5,349.2 L1795,349.2" stroke="#b2b2b2" stroke-width="1.3"/><path d="M1292.5,385.3 L1795,385.3" stroke="#b2b2b2" stroke-width="1.3"/><path d="M1292.5,421.4 L1795,421.4" stroke="#b2b2b2" stroke-width="1.3"/><path d="M1292.5,457.5 L1795,457.5" stroke="#b2b2b2" stroke-width="1.3"/><rect x="1329.3" y="314.4" width="89.4" height="34.1" fill="none" stroke="#f07a35" stroke-width="1.3"/><path d="M1307.4,326.6 L1313.6,332.2 L1307.4,337.8" fill="none" stroke="#333" stroke-width="1.5"/><rect x="1292.6" y="858.3" width="412.70000000000005" height="45.0" fill="#f0f0f0"/><rect x="1292.6" y="858.3" width="412.70000000000005" height="81.70000000000005" fill="none" stroke="#b2b2b2" stroke-width="1.4"/><path d="M1361.3,858.3 L1361.3,940" stroke="#b2b2b2" stroke-width="1.3"/><path d="M1430.4,858.3 L1430.4,940" stroke="#b2b2b2" stroke-width="1.3"/><path d="M1499.1,858.3 L1499.1,940" stroke="#b2b2b2" stroke-width="1.3"/><path d="M1567.2,858.3 L1567.2,940" stroke="#b2b2b2" stroke-width="1.3"/><path d="M1636.3,858.3 L1636.3,940" stroke="#b2b2b2" stroke-width="1.3"/><path d="M1292.6,903.3 L1705.3,903.3" stroke="#b2b2b2" stroke-width="1.3"/></svg><span class="t" style="top:285.22px;font-size:14.8px;color:#3a3a3a;font-weight:bold;left:1334.20px;transform:scaleX(1.0238);transform-origin:0 50%;">Member</span><span class="t" style="top:275.12px;font-size:14.8px;color:#3a3a3a;font-weight:bold;left:1425.20px;transform:scaleX(0.9918);transform-origin:0 50%;">N</span><span class="t" style="top:295.02px;font-size:14.8px;color:#3a3a3a;font-weight:bold;left:1425.60px;transform:scaleX(1.0215);transform-origin:0 50%;">[kN]</span><span class="t" style="top:275.12px;font-size:14.8px;color:#3a3a3a;font-weight:bold;left:1487.20px;transform:scaleX(0.9964);transform-origin:0 50%;">Vy</span><span class="t" style="top:295.02px;font-size:14.8px;color:#3a3a3a;font-weight:bold;left:1487.60px;transform:scaleX(1.0215);transform-origin:0 50%;">[kN]</span><span class="t" style="top:275.12px;font-size:14.8px;color:#3a3a3a;font-weight:bold;left:1550.20px;transform:scaleX(0.9722);transform-origin:0 50%;">Vz</span><span class="t" style="top:295.02px;font-size:14.8px;color:#3a3a3a;font-weight:bold;left:1550.60px;transform:scaleX(1.0215);transform-origin:0 50%;">[kN]</span><span class="t" style="top:275.12px;font-size:14.8px;color:#3a3a3a;font-weight:bold;left:1612.30px;transform:scaleX(1.0650);transform-origin:0 50%;">Mx</span><span class="t" style="top:295.02px;font-size:14.8px;color:#3a3a3a;font-weight:bold;left:1612.70px;transform:scaleX(1.0492);transform-origin:0 50%;">[kNm]</span><span class="t" style="top:275.12px;font-size:14.8px;color:#3a3a3a;font-weight:bold;left:1674.40px;transform:scaleX(1.0456);transform-origin:0 50%;">My</span><span class="t" style="top:295.02px;font-size:14.8px;color:#3a3a3a;font-weight:bold;left:1674.80px;transform:scaleX(1.0492);transform-origin:0 50%;">[kNm]</span><span class="t" style="top:275.12px;font-size:14.8px;color:#3a3a3a;font-weight:bold;left:1737.30px;transform:scaleX(1.0489);transform-origin:0 50%;">Mz</span><span class="t" style="top:295.02px;font-size:14.8px;color:#3a3a3a;font-weight:bold;left:1737.70px;transform:scaleX(1.0492);transform-origin:0 50%;">[kNm]</span><span class="t" style="top:325.97px;font-size:14.7px;color:#4a4a4a;left:1334.10px;transform:scaleX(1.0282);transform-origin:0 50%;">M5 / Begin</span><span class="t" style="top:325.97px;font-size:14.7px;color:#4a4a4a;left:1425.00px;transform:scaleX(0.8912);transform-origin:0 50%;">0.0</span><span class="t" style="top:325.97px;font-size:14.7px;color:#4a4a4a;left:1487.00px;transform:scaleX(0.8912);transform-origin:0 50%;">0.0</span><span class="t" style="top:325.97px;font-size:14.7px;color:#4a4a4a;left:1550.00px;transform:scaleX(0.8912);transform-origin:0 50%;">0.0</span><span class="t" style="top:325.97px;font-size:14.7px;color:#4a4a4a;left:1612.10px;transform:scaleX(0.8912);transform-origin:0 50%;">0.0</span><span class="t" style="top:325.97px;font-size:14.7px;color:#4a4a4a;left:1674.20px;transform:scaleX(0.8912);transform-origin:0 50%;">0.0</span><span class="t" style="top:325.97px;font-size:14.7px;color:#4a4a4a;left:1737.10px;transform:scaleX(0.8912);transform-origin:0 50%;">0.0</span><span class="t" style="top:362.02px;font-size:14.7px;color:#4a4a4a;left:1334.10px;transform:scaleX(1.0231);transform-origin:0 50%;">M19 / Begin</span><span class="t" style="top:362.02px;font-size:14.7px;color:#4a4a4a;left:1425.00px;transform:scaleX(0.8912);transform-origin:0 50%;">0.0</span><span class="t" style="top:362.02px;font-size:14.7px;color:#4a4a4a;left:1487.00px;transform:scaleX(0.8912);transform-origin:0 50%;">0.0</span><span class="t" style="top:362.02px;font-size:14.7px;color:#4a4a4a;left:1550.00px;transform:scaleX(0.8912);transform-origin:0 50%;">0.0</span><span class="t" style="top:362.02px;font-size:14.7px;color:#4a4a4a;left:1612.10px;transform:scaleX(0.8912);transform-origin:0 50%;">0.0</span><span class="t" style="top:362.02px;font-size:14.7px;color:#4a4a4a;left:1674.20px;transform:scaleX(0.8912);transform-origin:0 50%;">0.0</span><span class="t" style="top:362.02px;font-size:14.7px;color:#4a4a4a;left:1737.10px;transform:scaleX(0.8912);transform-origin:0 50%;">0.0</span><span class="t" style="top:398.07px;font-size:14.7px;color:#4a4a4a;left:1334.10px;transform:scaleX(1.0067);transform-origin:0 50%;">M19 / End</span><span class="t" style="top:398.07px;font-size:14.7px;color:#4a4a4a;left:1425.00px;transform:scaleX(0.8912);transform-origin:0 50%;">0.0</span><span class="t" style="top:398.07px;font-size:14.7px;color:#4a4a4a;left:1487.00px;transform:scaleX(0.8912);transform-origin:0 50%;">0.0</span><span class="t" style="top:398.07px;font-size:14.7px;color:#4a4a4a;left:1550.00px;transform:scaleX(0.8912);transform-origin:0 50%;">0.0</span><span class="t" style="top:398.07px;font-size:14.7px;color:#4a4a4a;left:1612.10px;transform:scaleX(0.8912);transform-origin:0 50%;">0.0</span><span class="t" style="top:398.07px;font-size:14.7px;color:#4a4a4a;left:1674.20px;transform:scaleX(0.8912);transform-origin:0 50%;">0.0</span><span class="t" style="top:398.07px;font-size:14.7px;color:#4a4a4a;left:1737.10px;transform:scaleX(0.8912);transform-origin:0 50%;">0.0</span><span class="t" style="top:434.12px;font-size:14.7px;color:#4a4a4a;left:1334.10px;transform:scaleX(1.0231);transform-origin:0 50%;">M29 / Begin</span><span class="t" style="top:434.12px;font-size:14.7px;color:#4a4a4a;left:1425.00px;transform:scaleX(0.8912);transform-origin:0 50%;">0.0</span><span class="t" style="top:434.12px;font-size:14.7px;color:#4a4a4a;left:1487.00px;transform:scaleX(0.8912);transform-origin:0 50%;">0.0</span><span class="t" style="top:434.12px;font-size:14.7px;color:#4a4a4a;left:1550.00px;transform:scaleX(0.8912);transform-origin:0 50%;">0.0</span><span class="t" style="top:434.12px;font-size:14.7px;color:#9a9a9a;font-style:italic;left:1613.10px;transform:scaleX(0.9108);transform-origin:0 50%;">0.0</span><span class="t" style="top:434.12px;font-size:14.7px;color:#9a9a9a;font-style:italic;left:1675.20px;transform:scaleX(0.9108);transform-origin:0 50%;">0.0</span><span class="t" style="top:434.12px;font-size:14.7px;color:#9a9a9a;font-style:italic;left:1738.10px;transform:scaleX(0.9108);transform-origin:0 50%;">0.0</span><span class="t" style="top:505.77px;font-size:14.7px;color:#4a4a4a;left:1280.00px;transform:scaleX(0.9980);transform-origin:0 50%;">Values in disabled cells are not taken into account in CBFEM</span><span class="t" style="top:525.77px;font-size:14.7px;color:#4a4a4a;left:1280.00px;transform:scaleX(1.0165);transform-origin:0 50%;">analysis. Members can be loaded only by that components of</span><span class="t" style="top:545.77px;font-size:14.7px;color:#4a4a4a;left:1280.00px;transform:scaleX(1.0310);transform-origin:0 50%;">internal forces which are defined in member "Model type".</span><span class="t" style="top:824.97px;font-size:18.8px;color:#3a3a3a;font-weight:bold;left:1280.70px;transform:scaleX(0.9343);transform-origin:0 50%;">Unbalanced forces</span><span class="t" style="top:865.02px;font-size:14.8px;color:#3a3a3a;font-weight:bold;left:1298.20px;transform:scaleX(0.9924);transform-origin:0 50%;">X</span><span class="t" style="top:885.22px;font-size:14.8px;color:#3a3a3a;font-weight:bold;left:1298.60px;transform:scaleX(1.0215);transform-origin:0 50%;">[kN]</span><span class="t" style="top:916.17px;font-size:14.7px;color:#4a4a4a;left:1298.20px;transform:scaleX(0.8912);transform-origin:0 50%;">0.0</span><span class="t" style="top:865.02px;font-size:14.8px;color:#3a3a3a;font-weight:bold;left:1366.90px;transform:scaleX(0.9519);transform-origin:0 50%;">Y</span><span class="t" style="top:885.22px;font-size:14.8px;color:#3a3a3a;font-weight:bold;left:1367.30px;transform:scaleX(1.0215);transform-origin:0 50%;">[kN]</span><span class="t" style="top:916.17px;font-size:14.7px;color:#4a4a4a;left:1366.90px;transform:scaleX(0.8912);transform-origin:0 50%;">0.0</span><span class="t" style="top:865.02px;font-size:14.8px;color:#3a3a3a;font-weight:bold;left:1436.00px;transform:scaleX(1.0611);transform-origin:0 50%;">Z</span><span class="t" style="top:885.22px;font-size:14.8px;color:#3a3a3a;font-weight:bold;left:1436.40px;transform:scaleX(1.0215);transform-origin:0 50%;">[kN]</span><span class="t" style="top:916.17px;font-size:14.7px;color:#4a4a4a;left:1436.00px;transform:scaleX(0.8912);transform-origin:0 50%;">0.0</span><span class="t" style="top:865.02px;font-size:14.8px;color:#3a3a3a;font-weight:bold;left:1504.70px;transform:scaleX(1.0650);transform-origin:0 50%;">Mx</span><span class="t" style="top:885.22px;font-size:14.8px;color:#3a3a3a;font-weight:bold;left:1505.10px;transform:scaleX(1.0492);transform-origin:0 50%;">[kNm]</span><span class="t" style="top:916.17px;font-size:14.7px;color:#4a4a4a;left:1504.70px;transform:scaleX(0.8912);transform-origin:0 50%;">0.0</span><span class="t" style="top:865.02px;font-size:14.8px;color:#3a3a3a;font-weight:bold;left:1572.80px;transform:scaleX(1.0456);transform-origin:0 50%;">My</span><span class="t" style="top:885.22px;font-size:14.8px;color:#3a3a3a;font-weight:bold;left:1573.20px;transform:scaleX(1.0492);transform-origin:0 50%;">[kNm]</span><span class="t" style="top:916.17px;font-size:14.7px;color:#4a4a4a;left:1572.80px;transform:scaleX(0.8912);transform-origin:0 50%;">0.0</span><span class="t" style="top:865.02px;font-size:14.8px;color:#3a3a3a;font-weight:bold;left:1641.90px;transform:scaleX(1.0489);transform-origin:0 50%;">Mz</span><span class="t" style="top:885.22px;font-size:14.8px;color:#3a3a3a;font-weight:bold;left:1642.30px;transform:scaleX(1.0492);transform-origin:0 50%;">[kNm]</span><span class="t" style="top:916.17px;font-size:14.7px;color:#4a4a4a;left:1641.90px;transform:scaleX(0.8912);transform-origin:0 50%;">0.0</span><div id="dlg" class="abs"></div><svg style="left:0;top:0" width="1100" height="930" viewBox="0 0 1100 930"><rect x="188.5" y="265.6" width="727" height="573.8" fill="#fff" stroke="#ababab" stroke-width="1.2"/><rect x="189" y="266.4" width="725.9399999999999" height="41.0" fill="#f0f0f0"/><rect x="431.2" y="308.4" width="79.7" height="34.4" fill="#ebebeb" stroke="#f07a35" stroke-width="1.3"/><path d="M269.66,266.4 L269.66,742.64" stroke="#b0b0b0" stroke-width="1.3"/><path d="M350.32,266.4 L350.32,742.64" stroke="#b0b0b0" stroke-width="1.3"/><path d="M430.98,266.4 L430.98,742.64" stroke="#b0b0b0" stroke-width="1.3"/><path d="M511.64,266.4 L511.64,742.64" stroke="#b0b0b0" stroke-width="1.3"/><path d="M592.30,266.4 L592.30,742.64" stroke="#b0b0b0" stroke-width="1.3"/><path d="M672.96,266.4 L672.96,742.64" stroke="#b0b0b0" stroke-width="1.3"/><path d="M753.62,266.4 L753.62,742.64" stroke="#b0b0b0" stroke-width="1.3"/><path d="M834.28,266.4 L834.28,742.64" stroke="#b0b0b0" stroke-width="1.3"/><path d="M914.94,266.4 L914.94,742.64" stroke="#b0b0b0" stroke-width="1.3"/><path d="M189,307.40 L914.94,307.40" stroke="#b0b0b0" stroke-width="1.3"/><path d="M189,343.67 L914.94,343.67" stroke="#b0b0b0" stroke-width="1.3"/><path d="M189,379.94 L914.94,379.94" stroke="#b0b0b0" stroke-width="1.3"/><path d="M189,416.21 L914.94,416.21" stroke="#b0b0b0" stroke-width="1.3"/><path d="M189,452.48 L914.94,452.48" stroke="#b0b0b0" stroke-width="1.3"/><path d="M189,488.75 L914.94,488.75" stroke="#b0b0b0" stroke-width="1.3"/><path d="M189,525.02 L914.94,525.02" stroke="#b0b0b0" stroke-width="1.3"/><path d="M189,561.29 L914.94,561.29" stroke="#b0b0b0" stroke-width="1.3"/><path d="M189,597.56 L914.94,597.56" stroke="#b0b0b0" stroke-width="1.3"/><path d="M189,633.83 L914.94,633.83" stroke="#b0b0b0" stroke-width="1.3"/><path d="M189,670.10 L914.94,670.10" stroke="#b0b0b0" stroke-width="1.3"/><path d="M189,706.37 L914.94,706.37" stroke="#b0b0b0" stroke-width="1.3"/><path d="M189,742.64 L914.94,742.64" stroke="#b0b0b0" stroke-width="1.3"/><rect x="431.2" y="308.4" width="79.7" height="34.4" fill="none" stroke="#f07a35" stroke-width="1.3"/><rect x="189" y="266.6" width="4" height="476.64" fill="#3c3c3c"/><rect x="923.3" y="227.2" width="12.7" height="2.7" fill="#828282"/><rect x="980.4" y="221" width="11" height="10.6" fill="none" stroke="#828282" stroke-width="1.3"/><rect x="979.8" y="220.2" width="12.2" height="3.5" fill="#828282"/><path d="M1036.4,221 L1047.2,231.4 M1047.2,221 L1036.4,231.4" stroke="#7c7c7c" stroke-width="2.2"/><rect x="947.5" y="466.5" width="43" height="39" fill="#fdfdfd" stroke="#9c9c9c" stroke-width="1"/><rect x="948.5" y="467.5" width="41" height="37" fill="none" stroke="#c2c2c2" stroke-width="1"/><rect x="949.5" y="468.5" width="39" height="35" fill="none" stroke="#a4a4a4" stroke-width="1"/><rect x="1016.5" y="466.5" width="40" height="39" fill="#fdfdfd" stroke="#9c9c9c" stroke-width="1"/><rect x="1017.5" y="467.5" width="38" height="37" fill="none" stroke="#c2c2c2" stroke-width="1"/><rect x="1018.5" y="468.5" width="36" height="35" fill="none" stroke="#a4a4a4" stroke-width="1"/><path d="M969.5,473 L979.9,483.7 L974.5,483.7 L974.5,499 L964.1,499 L964.1,483.7 L958.9,483.7 Z" fill="#5a5a5a"/><path d="M1032.1,473 L1042.2,473 L1042.2,489.1 L1047.4,489.1 L1037,499.4 L1026.8,489.1 L1032.1,489.1 Z" fill="#5a5a5a"/><rect x="814.5" y="862.5" width="124" height="32" fill="#9a9a9a" stroke="#b8b8b8" stroke-width="1"/><rect x="941.5" y="862.5" width="108.8" height="32" fill="#9a9a9a" stroke="#b8b8b8" stroke-width="1"/><rect x="622" y="868.2" width="14" height="13.6" rx="1.8" fill="#e4e4e4"/><path d="M624.7,874.4 L629.4,879.2 L638.2,866.4" fill="none" stroke="#f58220" stroke-width="2.5"/><rect x="928.5" y="263.5" width="143" height="255.8" rx="5" fill="none" stroke="#ff0000" stroke-width="5"/><rect x="602.4" y="851.4" width="199.4" height="46.4" rx="5.5" fill="none" stroke="#ff0000" stroke-width="4.6"/></svg><span class="t" style="top:220.22px;font-size:14.8px;color:#6e6e6e;left:174.60px;transform:scaleX(1.0333);transform-origin:0 50%;">Import of load effects</span><span class="t" style="top:280.92px;font-size:14.8px;color:#3a3a3a;font-weight:bold;left:195.00px;transform:scaleX(1.0146);transform-origin:0 50%;">Name</span><span class="t" style="top:280.92px;font-size:14.8px;color:#3a3a3a;font-weight:bold;left:275.46px;transform:scaleX(1.0308);transform-origin:0 50%;">Member</span><span class="t" style="top:280.92px;font-size:14.8px;color:#3a3a3a;font-weight:bold;left:356.12px;transform:scaleX(0.9645);transform-origin:0 50%;">Position</span><span class="t" style="top:280.92px;font-size:14.8px;color:#3a3a3a;font-weight:bold;left:436.78px;transform:scaleX(1.0441);transform-origin:0 50%;">N [kN]</span><span class="t" style="top:280.92px;font-size:14.8px;color:#3a3a3a;font-weight:bold;left:517.44px;transform:scaleX(1.0349);transform-origin:0 50%;">Vy [kN]</span><span class="t" style="top:280.92px;font-size:14.8px;color:#3a3a3a;font-weight:bold;left:598.10px;transform:scaleX(1.0308);transform-origin:0 50%;">Vz [kN]</span><span class="t" style="top:280.92px;font-size:14.8px;color:#3a3a3a;font-weight:bold;left:678.76px;transform:scaleX(1.0507);transform-origin:0 50%;">Mx [kNm</span><span class="t" style="top:280.92px;font-size:14.8px;color:#3a3a3a;font-weight:bold;left:759.42px;transform:scaleX(1.0621);transform-origin:0 50%;">My [kNm</span><span class="t" style="top:280.92px;font-size:14.8px;color:#3a3a3a;font-weight:bold;left:840.08px;transform:scaleX(1.0552);transform-origin:0 50%;">Mz [kNm</span><span class="t" style="top:320.30px;font-size:14.7px;color:#4a4a4a;left:194.80px;transform:scaleX(0.8263);transform-origin:0 50%;">LE3</span><span class="t" style="top:320.30px;font-size:14.7px;color:#4a4a4a;left:275.36px;transform:scaleX(1.0144);transform-origin:0 50%;">M5</span><span class="t" style="top:320.30px;font-size:14.7px;color:#4a4a4a;left:356.22px;transform:scaleX(0.9580);transform-origin:0 50%;">Begin</span><span class="t" style="top:320.30px;font-size:14.7px;color:#4a4a4a;left:436.58px;transform:scaleX(0.9521);transform-origin:0 50%;">-0.3</span><span class="t" style="top:320.30px;font-size:14.7px;color:#4a4a4a;left:517.24px;transform:scaleX(0.9010);transform-origin:0 50%;">0.0</span><span class="t" style="top:320.30px;font-size:14.7px;color:#4a4a4a;left:597.90px;transform:scaleX(0.9521);transform-origin:0 50%;">-1.9</span><span class="t" style="top:320.30px;font-size:14.7px;color:#4a4a4a;left:678.56px;transform:scaleX(0.9010);transform-origin:0 50%;">0.0</span><span class="t" style="top:320.30px;font-size:14.7px;color:#4a4a4a;left:759.22px;transform:scaleX(0.9010);transform-origin:0 50%;">0.0</span><span class="t" style="top:320.30px;font-size:14.7px;color:#4a4a4a;left:839.88px;transform:scaleX(0.9010);transform-origin:0 50%;">0.0</span><span class="t" style="top:356.57px;font-size:14.7px;color:#4a4a4a;left:275.36px;transform:scaleX(1.0113);transform-origin:0 50%;">M19</span><span class="t" style="top:356.57px;font-size:14.7px;color:#4a4a4a;left:356.22px;transform:scaleX(0.9580);transform-origin:0 50%;">Begin</span><span class="t" style="top:356.57px;font-size:14.7px;color:#4a4a4a;left:436.58px;transform:scaleX(0.9010);transform-origin:0 50%;">0.0</span><span class="t" style="top:356.57px;font-size:14.7px;color:#4a4a4a;left:517.24px;transform:scaleX(0.9010);transform-origin:0 50%;">0.1</span><span class="t" style="top:356.57px;font-size:14.7px;color:#4a4a4a;left:597.90px;transform:scaleX(0.9010);transform-origin:0 50%;">2.1</span><span class="t" style="top:356.57px;font-size:14.7px;color:#4a4a4a;left:678.56px;transform:scaleX(0.9010);transform-origin:0 50%;">0.0</span><span class="t" style="top:356.57px;font-size:14.7px;color:#4a4a4a;left:759.22px;transform:scaleX(0.9010);transform-origin:0 50%;">3.5</span><span class="t" style="top:356.57px;font-size:14.7px;color:#4a4a4a;left:839.88px;transform:scaleX(0.9521);transform-origin:0 50%;">-0.1</span><span class="t" style="top:392.84px;font-size:14.7px;color:#4a4a4a;left:275.36px;transform:scaleX(1.0113);transform-origin:0 50%;">M19</span><span class="t" style="top:392.84px;font-size:14.7px;color:#4a4a4a;left:356.22px;transform:scaleX(0.8875);transform-origin:0 50%;">End</span><span class="t" style="top:392.84px;font-size:14.7px;color:#4a4a4a;left:436.58px;transform:scaleX(0.9010);transform-origin:0 50%;">0.0</span><span class="t" style="top:392.84px;font-size:14.7px;color:#4a4a4a;left:517.24px;transform:scaleX(0.9010);transform-origin:0 50%;">0.0</span><span class="t" style="top:392.84px;font-size:14.7px;color:#4a4a4a;left:597.90px;transform:scaleX(0.9521);transform-origin:0 50%;">-0.1</span><span class="t" style="top:392.84px;font-size:14.7px;color:#4a4a4a;left:678.56px;transform:scaleX(0.9010);transform-origin:0 50%;">0.0</span><span class="t" style="top:392.84px;font-size:14.7px;color:#4a4a4a;left:759.22px;transform:scaleX(0.9521);transform-origin:0 50%;">-3.4</span><span class="t" style="top:392.84px;font-size:14.7px;color:#4a4a4a;left:839.88px;transform:scaleX(0.9010);transform-origin:0 50%;">0.1</span><span class="t" style="top:429.11px;font-size:14.7px;color:#4a4a4a;left:275.36px;transform:scaleX(1.0113);transform-origin:0 50%;">M29</span><span class="t" style="top:429.11px;font-size:14.7px;color:#4a4a4a;left:356.22px;transform:scaleX(0.9580);transform-origin:0 50%;">Begin</span><span class="t" style="top:429.11px;font-size:14.7px;color:#4a4a4a;left:436.58px;transform:scaleX(0.9010);transform-origin:0 50%;">0.1</span><span class="t" style="top:429.11px;font-size:14.7px;color:#4a4a4a;left:517.24px;transform:scaleX(0.9010);transform-origin:0 50%;">0.0</span><span class="t" style="top:429.11px;font-size:14.7px;color:#4a4a4a;left:597.90px;transform:scaleX(0.9521);transform-origin:0 50%;">-0.1</span><span class="t" style="top:429.11px;font-size:14.7px;color:#4a4a4a;left:678.56px;transform:scaleX(0.9010);transform-origin:0 50%;">0.0</span><span class="t" style="top:429.11px;font-size:14.7px;color:#4a4a4a;left:759.22px;transform:scaleX(0.9010);transform-origin:0 50%;">0.0</span><span class="t" style="top:429.11px;font-size:14.7px;color:#4a4a4a;left:839.88px;transform:scaleX(0.9010);transform-origin:0 50%;">0.0</span><span class="t" style="top:465.38px;font-size:14.7px;color:#4a4a4a;left:194.80px;transform:scaleX(0.8378);transform-origin:0 50%;">LE4</span><span class="t" style="top:465.38px;font-size:14.7px;color:#4a4a4a;left:275.36px;transform:scaleX(1.0144);transform-origin:0 50%;">M5</span><span class="t" style="top:465.38px;font-size:14.7px;color:#4a4a4a;left:356.22px;transform:scaleX(0.9580);transform-origin:0 50%;">Begin</span><span class="t" style="top:465.38px;font-size:14.7px;color:#4a4a4a;left:436.58px;transform:scaleX(0.9521);transform-origin:0 50%;">-0.4</span><span class="t" style="top:465.38px;font-size:14.7px;color:#4a4a4a;left:517.24px;transform:scaleX(0.9010);transform-origin:0 50%;">0.0</span><span class="t" style="top:465.38px;font-size:14.7px;color:#4a4a4a;left:597.90px;transform:scaleX(0.9521);transform-origin:0 50%;">-2.0</span><span class="t" style="top:465.38px;font-size:14.7px;color:#4a4a4a;left:678.56px;transform:scaleX(0.9010);transform-origin:0 50%;">0.0</span><span class="t" style="top:465.38px;font-size:14.7px;color:#4a4a4a;left:759.22px;transform:scaleX(0.9010);transform-origin:0 50%;">0.0</span><span class="t" style="top:465.38px;font-size:14.7px;color:#4a4a4a;left:839.88px;transform:scaleX(0.9010);transform-origin:0 50%;">0.0</span><span class="t" style="top:501.65px;font-size:14.7px;color:#4a4a4a;left:275.36px;transform:scaleX(1.0113);transform-origin:0 50%;">M19</span><span class="t" style="top:501.65px;font-size:14.7px;color:#4a4a4a;left:356.22px;transform:scaleX(0.9580);transform-origin:0 50%;">Begin</span><span class="t" style="top:501.65px;font-size:14.7px;color:#4a4a4a;left:436.58px;transform:scaleX(0.9010);transform-origin:0 50%;">0.0</span><span class="t" style="top:501.65px;font-size:14.7px;color:#4a4a4a;left:517.24px;transform:scaleX(0.9010);transform-origin:0 50%;">0.1</span><span class="t" style="top:501.65px;font-size:14.7px;color:#4a4a4a;left:597.90px;transform:scaleX(0.9010);transform-origin:0 50%;">2.2</span><span class="t" style="top:501.65px;font-size:14.7px;color:#4a4a4a;left:678.56px;transform:scaleX(0.9010);transform-origin:0 50%;">0.0</span><span class="t" style="top:501.65px;font-size:14.7px;color:#4a4a4a;left:759.22px;transform:scaleX(0.9010);transform-origin:0 50%;">3.7</span><span class="t" style="top:501.65px;font-size:14.7px;color:#4a4a4a;left:839.88px;transform:scaleX(0.9521);transform-origin:0 50%;">-0.1</span><span class="t" style="top:537.92px;font-size:14.7px;color:#4a4a4a;left:275.36px;transform:scaleX(1.0113);transform-origin:0 50%;">M19</span><span class="t" style="top:537.92px;font-size:14.7px;color:#4a4a4a;left:356.22px;transform:scaleX(0.8875);transform-origin:0 50%;">End</span><span class="t" style="top:537.92px;font-size:14.7px;color:#4a4a4a;left:436.58px;transform:scaleX(0.9010);transform-origin:0 50%;">0.0</span><span class="t" style="top:537.92px;font-size:14.7px;color:#4a4a4a;left:517.24px;transform:scaleX(0.9010);transform-origin:0 50%;">0.0</span><span class="t" style="top:537.92px;font-size:14.7px;color:#4a4a4a;left:597.90px;transform:scaleX(0.9521);transform-origin:0 50%;">-0.1</span><span class="t" style="top:537.92px;font-size:14.7px;color:#4a4a4a;left:678.56px;transform:scaleX(0.9010);transform-origin:0 50%;">0.0</span><span class="t" style="top:537.92px;font-size:14.7px;color:#4a4a4a;left:759.22px;transform:scaleX(0.9521);transform-origin:0 50%;">-3.7</span><span class="t" style="top:537.92px;font-size:14.7px;color:#4a4a4a;left:839.88px;transform:scaleX(0.9010);transform-origin:0 50%;">0.1</span><span class="t" style="top:574.19px;font-size:14.7px;color:#4a4a4a;left:275.36px;transform:scaleX(1.0113);transform-origin:0 50%;">M29</span><span class="t" style="top:574.19px;font-size:14.7px;color:#4a4a4a;left:356.22px;transform:scaleX(0.9580);transform-origin:0 50%;">Begin</span><span class="t" style="top:574.19px;font-size:14.7px;color:#4a4a4a;left:436.58px;transform:scaleX(0.9010);transform-origin:0 50%;">0.1</span><span class="t" style="top:574.19px;font-size:14.7px;color:#4a4a4a;left:517.24px;transform:scaleX(0.9010);transform-origin:0 50%;">0.0</span><span class="t" style="top:574.19px;font-size:14.7px;color:#4a4a4a;left:597.90px;transform:scaleX(0.9521);transform-origin:0 50%;">-0.1</span><span class="t" style="top:574.19px;font-size:14.7px;color:#4a4a4a;left:678.56px;transform:scaleX(0.9010);transform-origin:0 50%;">0.0</span><span class="t" style="top:574.19px;font-size:14.7px;color:#4a4a4a;left:759.22px;transform:scaleX(0.9010);transform-origin:0 50%;">0.0</span><span class="t" style="top:574.19px;font-size:14.7px;color:#4a4a4a;left:839.88px;transform:scaleX(0.9010);transform-origin:0 50%;">0.0</span><span class="t" style="top:610.46px;font-size:14.7px;color:#4a4a4a;left:194.80px;transform:scaleX(0.8263);transform-origin:0 50%;">LE5</span><span class="t" style="top:610.46px;font-size:14.7px;color:#4a4a4a;left:275.36px;transform:scaleX(1.0144);transform-origin:0 50%;">M5</span><span class="t" style="top:610.46px;font-size:14.7px;color:#4a4a4a;left:356.22px;transform:scaleX(0.9580);transform-origin:0 50%;">Begin</span><span class="t" style="top:610.46px;font-size:14.7px;color:#4a4a4a;left:436.58px;transform:scaleX(0.9521);transform-origin:0 50%;">-0.3</span><span class="t" style="top:610.46px;font-size:14.7px;color:#4a4a4a;left:517.24px;transform:scaleX(0.9010);transform-origin:0 50%;">0.0</span><span class="t" style="top:610.46px;font-size:14.7px;color:#4a4a4a;left:597.90px;transform:scaleX(0.9521);transform-origin:0 50%;">-1.9</span><span class="t" style="top:610.46px;font-size:14.7px;color:#4a4a4a;left:678.56px;transform:scaleX(0.9010);transform-origin:0 50%;">0.0</span><span class="t" style="top:610.46px;font-size:14.7px;color:#4a4a4a;left:759.22px;transform:scaleX(0.9010);transform-origin:0 50%;">0.0</span><span class="t" style="top:610.46px;font-size:14.7px;color:#4a4a4a;left:839.88px;transform:scaleX(0.9010);transform-origin:0 50%;">0.0</span><span class="t" style="top:646.73px;font-size:14.7px;color:#4a4a4a;left:275.36px;transform:scaleX(1.0113);transform-origin:0 50%;">M19</span><span class="t" style="top:646.73px;font-size:14.7px;color:#4a4a4a;left:356.22px;transform:scaleX(0.9580);transform-origin:0 50%;">Begin</span><span class="t" style="top:646.73px;font-size:14.7px;color:#4a4a4a;left:436.58px;transform:scaleX(0.9010);transform-origin:0 50%;">0.0</span><span class="t" style="top:646.73px;font-size:14.7px;color:#4a4a4a;left:517.24px;transform:scaleX(0.9010);transform-origin:0 50%;">0.1</span><span class="t" style="top:646.73px;font-size:14.7px;color:#4a4a4a;left:597.90px;transform:scaleX(0.9010);transform-origin:0 50%;">2.1</span><span class="t" style="top:646.73px;font-size:14.7px;color:#4a4a4a;left:678.56px;transform:scaleX(0.9010);transform-origin:0 50%;">0.0</span><span class="t" style="top:646.73px;font-size:14.7px;color:#4a4a4a;left:759.22px;transform:scaleX(0.9010);transform-origin:0 50%;">3.5</span><span class="t" style="top:646.73px;font-size:14.7px;color:#4a4a4a;left:839.88px;transform:scaleX(0.9521);transform-origin:0 50%;">-0.1</span><span class="t" style="top:683.00px;font-size:14.7px;color:#4a4a4a;left:275.36px;transform:scaleX(1.0113);transform-origin:0 50%;">M19</span><span class="t" style="top:683.00px;font-size:14.7px;color:#4a4a4a;left:356.22px;transform:scaleX(0.8875);transform-origin:0 50%;">End</span><span class="t" style="top:683.00px;font-size:14.7px;color:#4a4a4a;left:436.58px;transform:scaleX(0.9010);transform-origin:0 50%;">0.0</span><span class="t" style="top:683.00px;font-size:14.7px;color:#4a4a4a;left:517.24px;transform:scaleX(0.9010);transform-origin:0 50%;">0.0</span><span class="t" style="top:683.00px;font-size:14.7px;color:#4a4a4a;left:597.90px;transform:scaleX(0.9521);transform-origin:0 50%;">-0.1</span><span class="t" style="top:683.00px;font-size:14.7px;color:#4a4a4a;left:678.56px;transform:scaleX(0.9010);transform-origin:0 50%;">0.0</span><span class="t" style="top:683.00px;font-size:14.7px;color:#4a4a4a;left:759.22px;transform:scaleX(0.9521);transform-origin:0 50%;">-3.4</span><span class="t" style="top:683.00px;font-size:14.7px;color:#4a4a4a;left:839.88px;transform:scaleX(0.9010);transform-origin:0 50%;">0.1</span><span class="t" style="top:719.27px;font-size:14.7px;color:#4a4a4a;left:275.36px;transform:scaleX(1.0113);transform-origin:0 50%;">M29</span><span class="t" style="top:719.27px;font-size:14.7px;color:#4a4a4a;left:356.22px;transform:scaleX(0.9580);transform-origin:0 50%;">Begin</span><span class="t" style="top:719.27px;font-size:14.7px;color:#4a4a4a;left:436.58px;transform:scaleX(0.9010);transform-origin:0 50%;">0.1</span><span class="t" style="top:719.27px;font-size:14.7px;color:#4a4a4a;left:517.24px;transform:scaleX(0.9010);transform-origin:0 50%;">0.0</span><span class="t" style="top:719.27px;font-size:14.7px;color:#4a4a4a;left:597.90px;transform:scaleX(0.9521);transform-origin:0 50%;">-0.1</span><span class="t" style="top:719.27px;font-size:14.7px;color:#4a4a4a;left:678.56px;transform:scaleX(0.9010);transform-origin:0 50%;">0.0</span><span class="t" style="top:719.27px;font-size:14.7px;color:#4a4a4a;left:759.22px;transform:scaleX(0.9010);transform-origin:0 50%;">0.0</span><span class="t" style="top:719.27px;font-size:14.7px;color:#4a4a4a;left:839.88px;transform:scaleX(0.9010);transform-origin:0 50%;">0.0</span><span class="t" style="top:274.86px;font-size:15.4px;color:#1a1a1a;left:953.80px;transform:scaleX(0.9761);transform-origin:0 50%;">Order of loads</span><span class="t" style="top:308.37px;font-size:14.7px;color:#555;left:954.00px;transform:scaleX(1.0207);transform-origin:0 50%;">M5 - Begin</span><span class="t" style="top:342.37px;font-size:14.7px;color:#555;left:954.00px;transform:scaleX(1.0227);transform-origin:0 50%;">M19 - Begin</span><span class="t" style="top:376.07px;font-size:14.7px;color:#555;left:954.00px;transform:scaleX(1.0064);transform-origin:0 50%;">M19 - End</span><span class="t" style="top:409.57px;font-size:14.7px;color:#555;left:954.00px;transform:scaleX(1.0227);transform-origin:0 50%;">M29 - Begin</span><span class="t" style="top:870.32px;font-size:14.8px;color:#222;left:642.30px;transform:scaleX(0.9793);transform-origin:0 50%;">Replace existing loads</span><span class="t" style="top:871.38px;font-size:15.5px;color:#fff;left:866.30px;transform:scaleX(0.9105);transform-origin:0 50%;">OK</span><span class="t" style="top:871.38px;font-size:15.5px;color:#fff;left:966.20px;transform:scaleX(0.9202);transform-origin:0 50%;">Cancel</span>
</body>
</html>
